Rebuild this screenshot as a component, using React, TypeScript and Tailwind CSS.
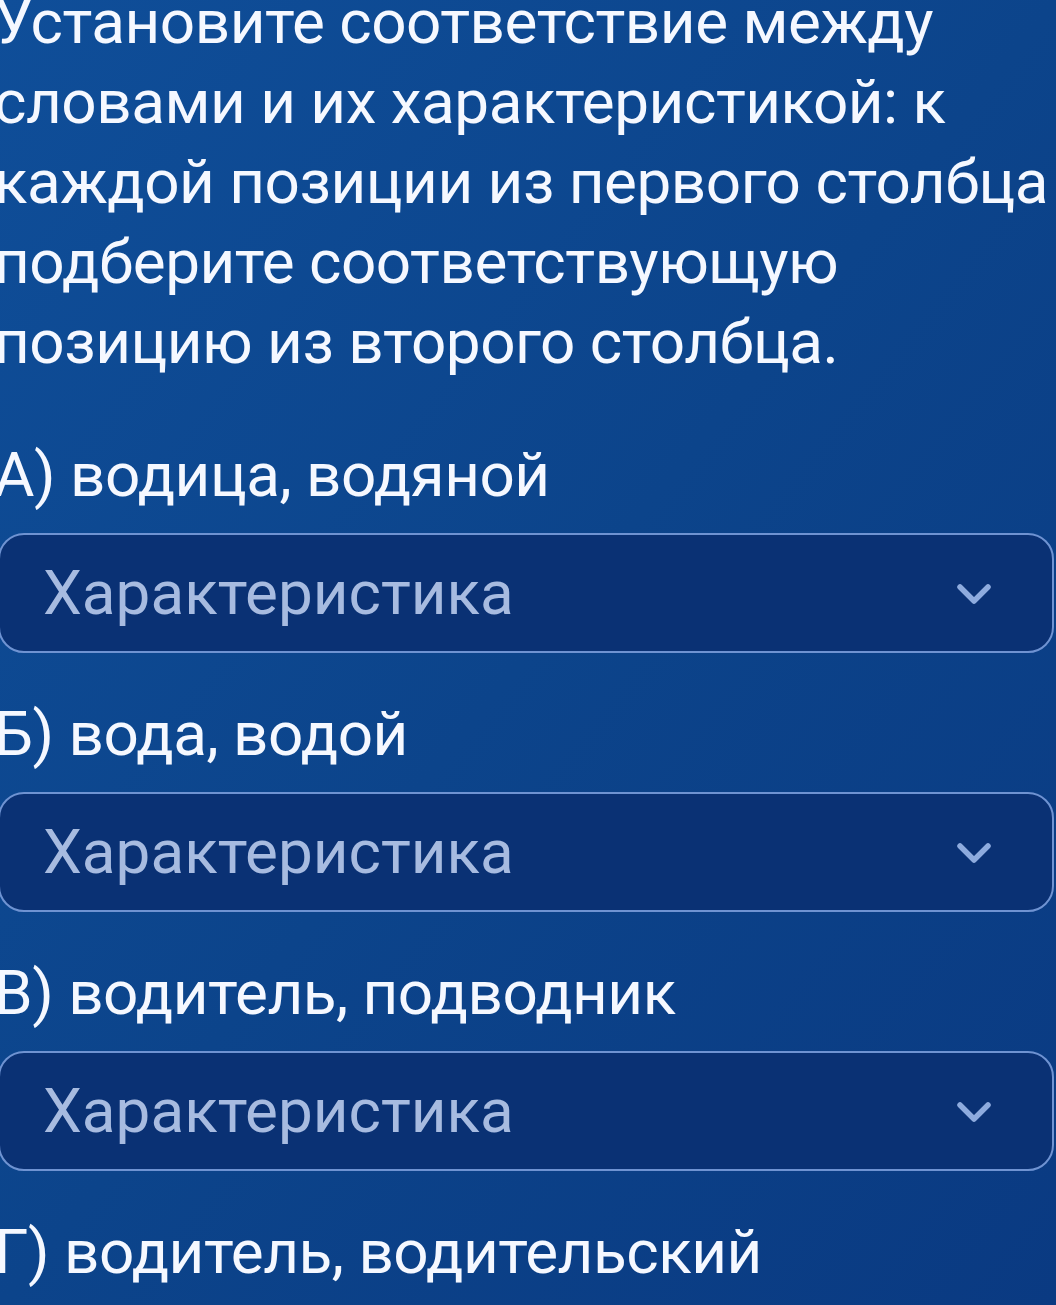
const items = [
  "А) водица, водяной",
  "Б) вода, водой",
  "В) водитель, подводник",
  "Г) водитель, водительский",
]

const Chevron = () => (
  <svg width="36" height="24" viewBox="0 0 36 24" fill="none" className="mt-[4px]">
    <polyline
      points="4,4 18,18 32,4"
      stroke="#8eabde"
      strokeWidth="5.5"
      strokeLinecap="round"
      strokeLinejoin="round"
    />
  </svg>
)

const Select = () => (
  <div className="flex items-center justify-between h-[120px] ml-[-2px] w-[1056px] rounded-[26px] border-2 border-[#6f93d2] bg-[#0a3174] pl-[43px] pr-[60px]">
    <span className="text-[62px] leading-none text-[#a7bbe0]">Характеристика</span>
    <Chevron />
  </div>
)

export default function App() {
  return (
    <div
      className="w-[1056px] h-[1305px] overflow-hidden bg-gradient-to-br from-[#0f4e99] via-[#0c448b] to-[#0a3a82] text-[#f5f8ff]"
      style={{ fontFamily: "Roboto, 'Noto Sans', sans-serif" }}
    >
      <div className="flex flex-col ml-[-6px] mt-[-18px] tracking-[-0.03em]">
        <p className="text-[62px] leading-[80px] whitespace-nowrap mb-[12px]">
          Установите соответствие между
          <br />
          словами и их характеристикой: к
          <br />
          каждой позиции из первого столбца
          <br />
          подберите соответствующую
          <br />
          позицию из второго столбца.
        </p>
        {items.map((item, i) => (
          <div key={item} className="flex flex-col mt-[41px]">
            <span className="text-[62px] leading-[80px] whitespace-nowrap">{item}</span>
            {i < 3 && (
              <div className="mt-[18px] ml-[6px] tracking-normal">
                <Select />
              </div>
            )}
          </div>
        ))}
      </div>
    </div>
  )
}
